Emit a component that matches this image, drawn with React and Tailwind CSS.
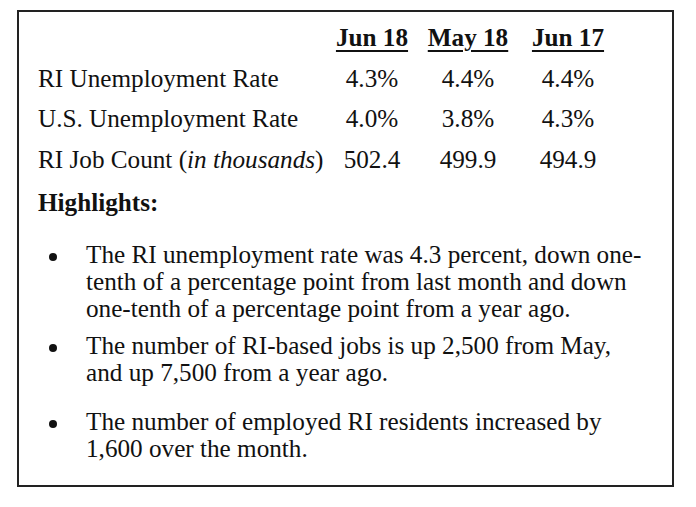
import React from 'react';

const rows = [
  { label: 'RI Unemployment Rate', values: ['4.3%', '4.4%', '4.4%'] },
  { label: 'U.S. Unemployment Rate', values: ['4.0%', '3.8%', '4.3%'] },
  { label: <>RI Job Count (<i>in thousands</i>)</>, values: ['502.4', '499.9', '494.9'] },
];

const highlights = [
  {
    lines: [
      'The RI unemployment rate was 4.3 percent, down one-',
      'tenth of a percentage point from last month and down',
      'one-tenth of a percentage point from a year ago.',
    ],
    gap: 'mt-[17px]',
  },
  {
    lines: ['The number of RI-based jobs is up 2,500 from May,', 'and up 7,500 from a year ago.'],
    gap: 'mt-[10px]',
  },
  {
    lines: ['The number of employed RI residents increased by', '1,600 over the month.'],
    gap: 'mt-[22px]',
  },
];

export default function App() {
  return (
    <div className="w-[696px] h-[507px] bg-white pt-[10px] pl-[17px]" style={{ fontFamily: '"Liberation Serif", "Times New Roman", serif' }}>
      <div className="w-[657px] h-[477px] border-2 border-[#222] pt-[6px] pl-[19px] text-[25.2px] text-[#111]">
        {/* Stats table */}
        <div className="grid grid-cols-[290px_88px_104px_96px] leading-[40.7px]">
          <div />
          {['Jun 18', 'May 18', 'Jun 17'].map((h) => (
            <div key={h} className="text-center font-bold underline decoration-2 underline-offset-[4px]">
              {h}
            </div>
          ))}
          {rows.map((r, i) => (
            <React.Fragment key={i}>
              <div className="whitespace-nowrap">{r.label}</div>
              {r.values.map((v, j) => (
                <div key={j} className="text-center">{v}</div>
              ))}
            </React.Fragment>
          ))}
        </div>

        <div className="font-bold leading-[40.7px] mt-[2px]">Highlights:</div>

        {/* Bullet list */}
        <ul className="leading-[27px]">
          {highlights.map((h, i) => (
            <li key={i} className={`flex ${h.gap}`}>
              <span className="w-[48px] shrink-0 pt-[12px] pl-[11px]">
                <span className="block w-[8px] h-[8px] rounded-full bg-[#111]" />
              </span>
              <span className="whitespace-nowrap">
                {h.lines.map((l, k) => (
                  <span key={k} className="block">{l}</span>
                ))}
              </span>
            </li>
          ))}
        </ul>
      </div>
    </div>
  );
}
